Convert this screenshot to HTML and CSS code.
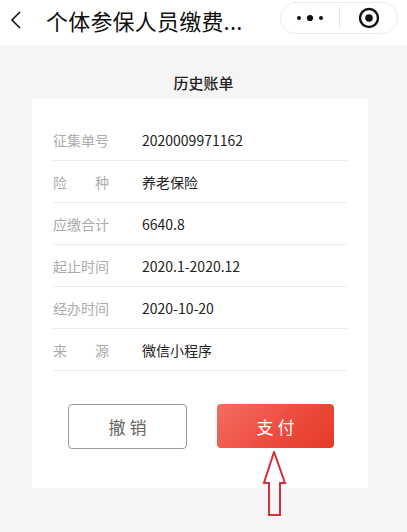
FILE: index.html
```html
<!DOCTYPE html>
<html lang="zh-CN">
<head>
<meta charset="utf-8">
<link rel="stylesheet" href="styles.css">
</head>
<body>
<div class="page">
  <header class="nav">
    <svg class="back" width="14" height="20" viewBox="0 0 14 20"><path d="M11 2 L3 10 L11 18" fill="none" stroke="#111" stroke-width="1.6"/></svg>
    <div class="nav-title">个体参保人员缴费...</div>
    <div class="capsule">
      <svg class="more" width="34" height="10" viewBox="0 0 34 10"><circle cx="6" cy="5" r="2" fill="#111"/><circle cx="17" cy="5" r="3.1" fill="#111"/><circle cx="28" cy="5" r="2" fill="#111"/></svg>
      <span class="cap-div"></span>
      <svg class="target" width="22" height="22" viewBox="0 0 22 22"><circle cx="11" cy="11" r="9" fill="none" stroke="#111" stroke-width="2.4"/><circle cx="11" cy="11" r="3.8" fill="#111"/></svg>
    </div>
  </header>

  <h1 class="title">历史账单</h1>

  <section class="card">
    <div class="row"><span class="label">征集单号</span><span class="value">2020009971162</span></div>
    <div class="row"><span class="label">险种</span><span class="value">养老保险</span></div>
    <div class="row"><span class="label">应缴合计</span><span class="value">6640.8</span></div>
    <div class="row"><span class="label">起止时间</span><span class="value">2020.1-2020.12</span></div>
    <div class="row"><span class="label">经办时间</span><span class="value">2020-10-20</span></div>
    <div class="row"><span class="label">来源</span><span class="value">微信小程序</span></div>
    <div class="actions">
      <button class="btn btn-cancel">撤 销</button>
      <button class="btn btn-pay">支 付</button>
    </div>
  </section>

  <svg class="arrow" width="28" height="68" viewBox="0 0 28 68"><path d="M12 1 L2 32 L7 32 L7 64 L18 64 L18 32 L23 32 Z" fill="none" stroke="#d3303a" stroke-width="2" stroke-linejoin="miter"/></svg>
</div>
</body>
</html>
```

FILE: styles.css
```css
* { box-sizing: border-box; }
html, body { margin: 0; padding: 0; }
body {
  width: 407px;
  height: 532px;
  overflow: hidden;
  background: #f5f5f5;
  font-family: "Noto Sans CJK SC", "Noto Sans", sans-serif;
}
.page { position: relative; width: 407px; height: 532px; }

.nav {
  height: 45px;
  background: #fff;
  display: flex;
  align-items: center;
  padding-left: 9px;
}
.back { flex: none; margin-top: -6px; }
.nav-title {
  margin-left: 23px;
  font-size: 22px;
  line-height: 30px;
  color: #111;
  margin-top: -6px;
  letter-spacing: 0.2px;
}
.capsule {
  margin-left: auto;
  margin-right: 9px;
  margin-top: -10px;
  width: 118px;
  height: 32px;
  border: 1px solid #ececec;
  border-radius: 16px;
  display: flex;
  align-items: center;
}
.more { margin-left: 12px; }
.cap-div { width: 1px; height: 22px; background: #e8e8e8; margin-left: 12px; }
.target { margin-left: 18px; }

.title {
  margin: 0;
  padding-top: 28px;
  height: 54px;
  text-align: center;
  font-size: 15px;
  line-height: 20px;
  font-weight: 500;
  color: #222;
}

.card {
  margin: 0 39px 0 32px;
  background: #fff;
  padding: 20px 21px 39px;
  height: 389px;
}
.row {
  height: 42px;
  display: flex;
  align-items: center;
  border-bottom: 1px solid #ececec;
}
.label {
  width: 56px;
  font-size: 14px;
  color: #ababab;
  text-align: justify;
  text-align-last: justify;
}
.value {
  margin-left: 33px;
  font-size: 14px;
  color: #222;
}
.actions {
  display: flex;
  justify-content: center;
  gap: 30px;
  margin-top: 33px;
  padding-left: 2px;
}
.btn {
  height: 45px;
  border-radius: 4px;
  font-family: inherit;
  font-size: 17px;
  padding: 0;
}
.btn-cancel {
  width: 119px;
  background: #fff;
  border: 1px solid #9a9a9a;
  color: #666;
}
.btn-pay {
  width: 117px;
  height: 44px;
  border: none;
  color: #fff;
  background: linear-gradient(135deg, #f46d61 0%, #ec4a3c 60%, #e53a28 100%);
}

.arrow {
  position: absolute;
  left: 262px;
  top: 451px;
}
```
